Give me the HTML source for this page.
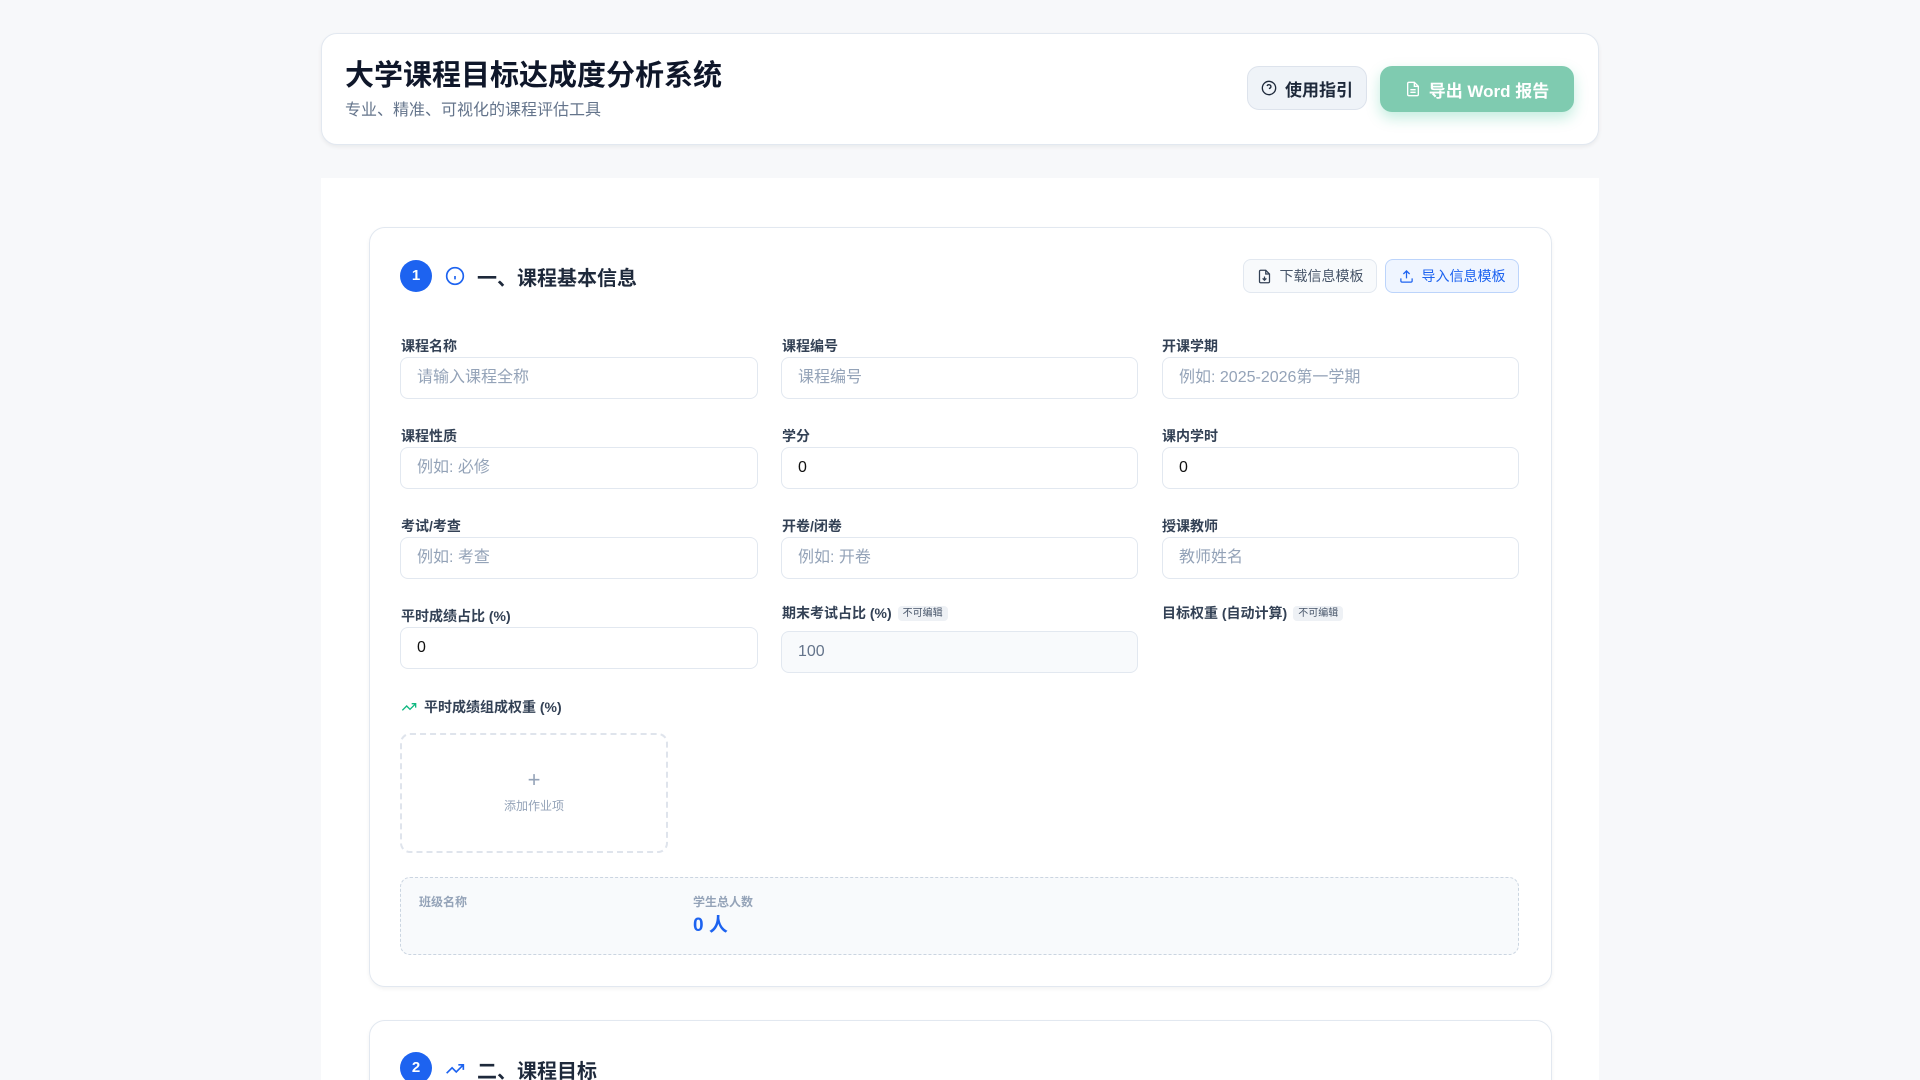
<!DOCTYPE html>
<html style="overflow:hidden;height:1080px"><head><meta charset="utf-8"><style>
*{box-sizing:border-box;margin:0;padding:0}
body{width:1920px;height:1080px;overflow:hidden;background:#f7f8fa;font-family:"Liberation Sans","Noto Sans CJK SC",sans-serif;position:relative;color:#1e293b}
.a{position:absolute}
.hdr{left:321px;top:33px;width:1278px;height:112px;background:#fff;border:1px solid #e2e8f0;border-radius:16px;box-shadow:0 2px 4px rgba(0,0,0,.06)}
.main{left:321px;top:178px;width:1278px;height:902px;background:#fff}
.card{left:369px;width:1183px;background:#fff;border:1px solid #e2e8f0;border-radius:16px;box-shadow:0 2px 4px rgba(0,0,0,.05)}
.badge{width:32px;height:32px;border-radius:50%;background:#1d63f0;color:#fff;font-weight:bold;font-size:15px;text-align:center;line-height:32px}
.lbl{font-size:14px;font-weight:bold;color:#334155}
.inp{height:42px;border:1px solid #e2e8f0;border-radius:8px;background:#fff;font-size:16px;padding-left:16px;line-height:40px;color:#94a3b8}
.v{color:#111}
.tag{font-size:10px;background:#eef1f5;color:#475569;padding:2px 5px;border-radius:4px;font-weight:normal;margin-left:6px;vertical-align:2px}
.btn{border-radius:8px;font-size:14px;display:flex;align-items:center;justify-content:center;gap:8px}
</style></head><body>
<div class="a hdr"></div>
<div class="a" style="left:345px;top:52px;font-size:29px;font-weight:bold;color:#0f172a">大学课程目标达成度分析系统</div>
<div class="a" style="left:345px;top:96px;font-size:16px;color:#64748b">专业、精准、可视化的课程评估工具</div>
<div class="a btn" style="left:1247px;top:66px;width:120px;height:44px;background:#eff3f8;border:1px solid #dde3ec;border-radius:12px;font-size:17px;font-weight:bold;color:#1e293b">
<svg width="16" height="16" viewBox="0 0 24 24" fill="none" stroke="#1e293b" stroke-width="2"><circle cx="12" cy="12" r="10"/><path d="M9.1 9a3 3 0 0 1 5.8 1c0 2-3 3-3 3"/><path d="M12 17h.01"/></svg>使用指引</div>
<div class="a btn" style="left:1380px;top:66px;width:194px;height:46px;background:#7fcbb0;border-radius:12px;font-size:17px;font-weight:bold;color:#fff;box-shadow:0 6px 14px rgba(16,185,129,.25)">
<svg width="16" height="16" viewBox="0 0 24 24" fill="none" stroke="#fff" stroke-width="2"><path d="M14 2H6a2 2 0 0 0-2 2v16a2 2 0 0 0 2 2h12a2 2 0 0 0 2-2V8z"/><path d="M14 2v6h6M16 13H8M16 17H8"/></svg>导出 Word 报告</div>
<div class="a main"></div>
<div class="a card" style="top:227px;height:760px"></div>
<div class="a badge" style="left:400px;top:260px">1</div>
<svg class="a" style="left:445px;top:266px" width="20" height="20" viewBox="0 0 24 24" fill="none" stroke="#1d63f0" stroke-width="2"><circle cx="12" cy="12" r="10"/><path d="M12 16v-4M12 8h.01"/></svg>
<div class="a" style="left:477px;top:262px;font-size:20px;font-weight:bold;color:#1e293b">一、课程基本信息</div>
<div class="a btn" style="left:1243px;top:259px;width:134px;height:34px;background:#f8fafc;border:1px solid #e2e8f0;color:#475569">
<svg width="15" height="15" viewBox="0 0 24 24" fill="none" stroke="#334155" stroke-width="2"><path d="M14 2H6a2 2 0 0 0-2 2v16a2 2 0 0 0 2 2h12a2 2 0 0 0 2-2V8z"/><path d="M14 2v6h6M12 12v6M9 15l3 3 3-3"/></svg>下载信息模板</div>
<div class="a btn" style="left:1385px;top:259px;width:134px;height:34px;background:#eff5ff;border:1px solid #bcd4fb;color:#1d63f0">
<svg width="15" height="15" viewBox="0 0 24 24" fill="none" stroke="#1d63f0" stroke-width="2"><path d="M21 15v4a2 2 0 0 1-2 2H5a2 2 0 0 1-2-2v-4M17 8l-5-5-5 5M12 3v12"/></svg>导入信息模板</div>

<div class="a lbl" style="left:401px;top:336px">课程名称</div>
<div class="a inp" style="left:400px;top:357px;width:358px">请输入课程全称</div>
<div class="a lbl" style="left:782px;top:336px">课程编号</div>
<div class="a inp" style="left:781px;top:357px;width:357px">课程编号</div>
<div class="a lbl" style="left:1162px;top:336px">开课学期</div>
<div class="a inp" style="left:1162px;top:357px;width:357px">例如: 2025-2026第一学期</div>

<div class="a lbl" style="left:401px;top:426px">课程性质</div>
<div class="a inp" style="left:400px;top:447px;width:358px">例如: 必修</div>
<div class="a lbl" style="left:782px;top:426px">学分</div>
<div class="a inp v" style="left:781px;top:447px;width:357px">0</div>
<div class="a lbl" style="left:1162px;top:426px">课内学时</div>
<div class="a inp v" style="left:1162px;top:447px;width:357px">0</div>

<div class="a lbl" style="left:401px;top:516px">考试/考查</div>
<div class="a inp" style="left:400px;top:537px;width:358px">例如: 考查</div>
<div class="a lbl" style="left:782px;top:516px">开卷/闭卷</div>
<div class="a inp" style="left:781px;top:537px;width:357px">例如: 开卷</div>
<div class="a lbl" style="left:1162px;top:516px">授课教师</div>
<div class="a inp" style="left:1162px;top:537px;width:357px">教师姓名</div>

<div class="a lbl" style="left:401px;top:606px">平时成绩占比 (%)</div>
<div class="a inp v" style="left:400px;top:627px;width:358px">0</div>
<div class="a lbl" style="left:782px;top:603px">期末考试占比 (%)<span class="tag">不可编辑</span></div>
<div class="a inp" style="left:781px;top:631px;width:357px;background:#f8fafc;color:#64748b">100</div>
<div class="a lbl" style="left:1162px;top:603px">目标权重 (自动计算)<span class="tag">不可编辑</span></div>

<svg class="a" style="left:401px;top:699px" width="16" height="16" viewBox="0 0 24 24" fill="none" stroke="#10b981" stroke-width="2"><path d="M22 7l-8.5 8.5-5-5L2 17M16 7h6v6"/></svg>
<div class="a lbl" style="left:424px;top:697px">平时成绩组成权重 (%)</div>
<div class="a" style="left:400px;top:733px;width:268px;height:120px;border:2px dashed #dfe4ec;border-radius:10px;text-align:center;color:#94a3b8">
<div style="font-size:22px;margin-top:34px;line-height:22px">+</div><div style="font-size:12px;margin-top:6px">添加作业项</div></div>
<div class="a" style="left:400px;top:877px;width:1119px;height:78px;border:1px dashed #cbd5e1;border-radius:10px;background:#f8fafc"></div>
<div class="a" style="left:419px;top:893px;font-size:12px;font-weight:bold;color:#94a3b8">班级名称</div>
<div class="a" style="left:693px;top:893px;font-size:12px;font-weight:bold;color:#94a3b8">学生总人数</div>
<div class="a" style="left:693px;top:910px;font-size:19px;font-weight:bold;color:#1d63f0">0 人</div>

<div class="a card" style="top:1020px;height:80px"></div>
<div class="a badge" style="left:400px;top:1052px">2</div>
<svg class="a" style="left:445px;top:1059px" width="20" height="20" viewBox="0 0 24 24" fill="none" stroke="#1d63f0" stroke-width="2"><path d="M22 7l-8.5 8.5-5-5L2 17M16 7h6v6"/></svg>
<div class="a" style="left:477px;top:1055px;font-size:20px;font-weight:bold;color:#1e293b">二、课程目标</div>
</body></html>
